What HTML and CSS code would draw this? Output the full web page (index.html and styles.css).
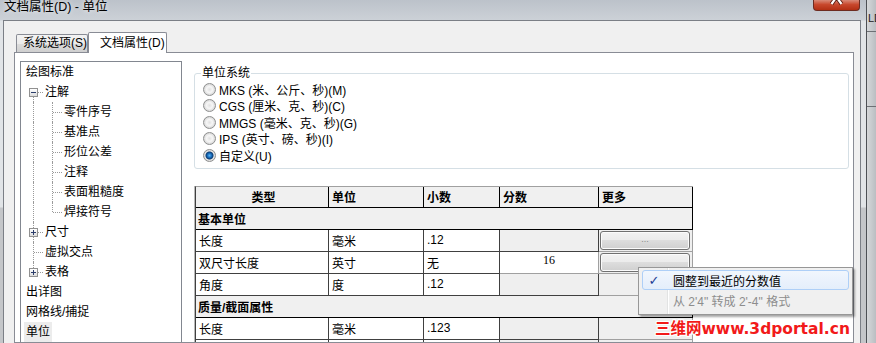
FILE: index.html
```html
<!DOCTYPE html>
<html lang="zh">
  <head>
    <meta charset="UTF-8" />
    <title>文档属性(D) - 单位</title>
    <link rel="stylesheet" href="styles.css">
  </head>
  <body>
    <div class="desk">
      <div class="dialog">
        <div class="titlebar">
          <span class="title">文档属性(D) - 单位</span>
          <span class="close">
            <svg width="47" height="11" viewBox="0 0 47 11">
              <path d="M23.5 -3 L18.5 4 M23.5 -3 L28.5 4" stroke="#5a1c10" stroke-width="4" fill="none" />
              <path d="M23.5 -3 L18.5 4 M23.5 -3 L28.5 4" stroke="#fff" stroke-width="2.2" fill="none" />
            </svg>
          </span>
        </div>
        <div class="client">
          <div class="tabs">
            <div class="tab">系统选项(S)</div>
            <div class="tab active">文档属性(D)</div>
          </div>
          <div class="panel">
            <div class="tree">
              <div class="node"><span class="label">绘图标准</span></div>
              <div class="node"><span class="g first"><i class="box"></i></span><span class="label">注解</span></div>
              <div class="node"><span class="g pipe"></span><span class="g tee"></span><span class="label">零件序号</span></div>
              <div class="node"><span class="g pipe"></span><span class="g tee"></span><span class="label">基准点</span></div>
              <div class="node"><span class="g pipe"></span><span class="g tee"></span><span class="label">形位公差</span></div>
              <div class="node"><span class="g pipe"></span><span class="g tee"></span><span class="label">注释</span></div>
              <div class="node"><span class="g pipe"></span><span class="g tee"></span><span class="label">表面粗糙度</span></div>
              <div class="node"><span class="g pipe"></span><span class="g elbow"></span><span class="label">焊接符号</span></div>
              <div class="node"><span class="g tee"><i class="box plus"></i></span><span class="label">尺寸</span></div>
              <div class="node"><span class="g tee"></span><span class="label">虚拟交点</span></div>
              <div class="node"><span class="g elbow"><i class="box plus"></i></span><span class="label">表格</span></div>
              <div class="node"><span class="label">出详图</span></div>
              <div class="node"><span class="label">网格线/捕捉</span></div>
              <div class="node"><span class="label sel">单位</span></div>
            </div>
            <div class="pane">
              <fieldset class="group">
                <legend>单位系统</legend>
                <label class="radio"><span class="dot"></span>MKS (米、公斤、秒)(M)</label>
                <label class="radio"><span class="dot"></span>CGS (厘米、克、秒)(C)</label>
                <label class="radio"><span class="dot"></span>MMGS (毫米、克、秒)(G)</label>
                <label class="radio"><span class="dot"></span>IPS (英寸、磅、秒)(I)</label>
                <label class="radio checked"><span class="dot"></span>自定义(U)</label>
              </fieldset>
              <table class="units">
                <tr class="head">
                  <th class="c1">类型</th>
                  <th class="c2">单位</th>
                  <th class="c3">小数</th>
                  <th class="c4">分数</th>
                  <th class="c5">更多</th>
                </tr>
                <tr class="section"><td colspan="5">基本单位</td></tr>
                <tr>
                  <td>长度</td><td>毫米</td><td>.12</td><td class="off"></td>
                  <td class="off lite"><span class="more-btn">...</span></td>
                </tr>
                <tr>
                  <td>双尺寸长度</td><td>英寸</td><td>无</td><td class="lite frac">16</td>
                  <td class="off lite"><span class="more-btn"></span></td>
                </tr>
                <tr>
                  <td>角度</td><td>度</td><td>.12</td><td class="off"></td><td class="off lite"></td>
                </tr>
                <tr class="section"><td colspan="5">质量/截面属性</td></tr>
                <tr>
                  <td>长度</td><td>毫米</td><td>.123</td><td class="off"></td><td class="off lite"></td>
                </tr>
                <tr>
                  <td>质量</td><td>千克</td><td>.12</td><td class="off"></td><td class="off lite"></td>
                </tr>
              </table>
            </div>
          </div>
        </div>
      </div>
      <div class="behind"><span>LD</span></div>

      <div class="menu">
        <div class="item hot"><span class="check">✓</span>圆整到最近的分数值</div>
        <div class="item gray"><span class="check"></span>从 2'4" 转成 2'-4" 格式</div>
      </div>
      <div class="mark">三维网www.3dportal.cn</div>
    </div>
  </body>
</html>
```

FILE: styles.css
```css
body {
  margin: 0;
  width: 876px;
  height: 343px;
  overflow: hidden;
  font-family: 'Liberation Sans', 'Noto Sans CJK SC', sans-serif;
  font-size: 12px;
  color: #000;
}
.desk {
  position: relative;
  display: flex;
  height: 343px;
}
.dialog {
  width: 866px;
  flex: none;
  display: flex;
  flex-direction: column;
  background: linear-gradient(#bcc2ca 0, #ccd1d7 20px, #e1e4e7 21px, #e1e4e7 207px, #c4c6c9 208px, #c4c6c9 100%);
}
.titlebar {
  height: 20px;
  display: flex;
  justify-content: space-between;
  align-items: flex-start;
}
.title {
  padding-left: 4px;
  line-height: 15px;
  font-size: 12.5px;
  text-shadow: 0 0 5px rgba(255,255,255,0.9);
}
.close {
  width: 47px;
  height: 11px;
  margin-right: 6px;
  box-sizing: border-box;
  border: 1px solid #6d2b20;
  border-top: 0;
  border-radius: 0 0 4px 4px;
  background: linear-gradient(#d98a78, #c8482d 45%, #b22f13);
  overflow: hidden;
}
.close svg {
  display: block;
  margin-left: -1px;
}
.client {
  flex: 1;
  min-height: 0;
  margin: 0 5px 0 3px;
  border: 1px solid #7b7f86;
  border-bottom: 0;
  background: #f0f0f0;
  padding: 11px 6px 0 10px;
  display: flex;
  flex-direction: column;
}
.tabs {
  display: flex;
  align-items: flex-end;
  height: 21px;
  padding-left: 2px;
  margin-bottom: -1px;
  position: relative;
  z-index: 1;
}
.tab {
  box-sizing: border-box;
  width: 72px;
  height: 18px;
  margin-bottom: 1px;
  padding-left: 6px;
  line-height: 17px;
  white-space: nowrap;
  overflow: hidden;
  border: 1px solid #898c95;
  border-bottom: 0;
  border-radius: 2px 2px 0 0;
  background: linear-gradient(#f3f3f3, #ebebeb 50%, #dddddd 50%, #cfcfcf);
}
.tab.active {
  width: 79px;
  height: 21px;
  margin-bottom: 0;
  padding-left: 11px;
  line-height: 20px;
  background: #fff;
}
.panel {
  flex: 1;
  min-height: 0;
  display: flex;
  border: 1px solid #898c95;
  background: #fff;
  padding-left: 5px;
  overflow: hidden;
}
.tree {
  width: 162px;
  height: 300px;
  flex: none;
  margin-top: 8px;
  box-sizing: border-box;
  border: 1px solid #828790;
  padding-left: 3px;
}
.node {
  display: flex;
  height: 20px;
  line-height: 20px;
}
.label {
  padding: 0 2px;
}
.label.sel {
  background: #ececec;
}
.g {
  position: relative;
  width: 19px;
  flex: none;
}
.g::before {
  content: "";
  position: absolute;
  left: 9px;
  top: 0;
  bottom: 0;
  border-left: 1px dotted #9a9a9a;
}
.g::after {
  content: "";
  position: absolute;
  left: 10px;
  right: 0;
  top: 10px;
  border-top: 1px dotted #9a9a9a;
}
.g.pipe::after {
  display: none;
}
.g.elbow::before {
  bottom: 10px;
}
.g.first::before {
  top: 10px;
}
.box {
  position: absolute;
  left: 5px;
  top: 6px;
  width: 9px;
  height: 9px;
  box-sizing: border-box;
  border: 1px solid #919191;
  background: linear-gradient(#ffffff, #dcdcdc);
  z-index: 1;
}
.box::before {
  content: "";
  position: absolute;
  left: 1px;
  top: 3px;
  width: 5px;
  height: 1px;
  background: #2c3e6b;
}
.box.plus::after {
  content: "";
  position: absolute;
  left: 3px;
  top: 1px;
  width: 1px;
  height: 5px;
  background: #2c3e6b;
}
.pane {
  flex: 1;
  padding: 0 4px 0 12px;
}
.group {
  margin: 12px 0 0 0;
  padding: 0 8px 4px 8px;
  border: 1px solid #d5dfe5;
  border-radius: 3px;
  min-width: 0;
}
.group legend {
  padding: 0 1px;
  margin-left: -2px;
  line-height: 16px;
}
.radio {
  display: flex;
  align-items: center;
  height: 16.5px;
  white-space: nowrap;
}
.dot {
  width: 13px;
  height: 13px;
  margin-right: 3px;
  box-sizing: border-box;
  border-radius: 50%;
  border: 1px solid #8e8f8f;
  background: radial-gradient(circle, #e2e2e2 0, #f6f6f6 3px, #d4d4d4 6px);
}
.radio.checked .dot {
  background: radial-gradient(circle, #5cb6f2 0, #1a6fc0 2px, #0b3d74 3.5px, #e6e6e6 4.5px, #d2d2d2 6px);
}
.units {
  margin: 17px 0 0 1px;
  width: 498px;
  table-layout: fixed;
  border-spacing: 0;
  border-top: 1px solid #a0a0a0;
  border-left: 1px solid #404040;
  box-shadow: -1px 0 0 #b8b8b8;
}
.units th,
.units td {
  box-sizing: border-box;
  height: 22px;
  padding: 0 0 0 3px;
  border-right: 1px solid #404040;
  border-bottom: 1px solid #404040;
  white-space: nowrap;
  overflow: hidden;
}
.units th {
  height: 21px;
  background: #f0f0f0;
  text-align: left;
  font-weight: bold;
  border-right-color: #000;
  border-bottom-color: #000;
}
.units th.c1 {
  width: 133px;
  text-align: center;
}
.units th.c2 { width: 95px; }
.units th.c3 { width: 76px; }
.units th.c4 { width: 99px; }
.units th.c5 { width: 94px; }
.units .section td {
  background: #f0f0f0;
  font-weight: bold;
  padding-left: 2px;
  border-right-color: #000;
  border-bottom-color: #000;
}
.units td.off {
  background: #efefef;
}
.units td.lite {
  border-right-color: #a0a0a0;
  border-bottom-color: #a0a0a0;
}
.units td.frac {
  padding: 0 0 4px;
  text-align: center;
  font-family: 'Liberation Serif', serif;
}
.more-btn {
  display: block;
  width: 90px;
  height: 19px;
  margin: 0 0 0 -2px;
  box-sizing: border-box;
  border: 1px solid #707070;
  border-radius: 3px;
  box-shadow: inset 0 0 0 1px #fbfbfb;
  background: linear-gradient(#f2f2f2, #ebebeb 50%, #dddddd 50%, #cfcfcf);
  color: #8a8a8a;
  font-size: 9px;
  line-height: 15px;
  text-align: center;
}
.behind {
  flex: 1;
  border-left: 1px solid #4d5055;
  background:
    linear-gradient(transparent 31px, #6d7075 31px, #6d7075 32px, transparent 32px, transparent 106px, #6d7075 106px, #6d7075 107px, transparent 107px),
    linear-gradient(to right, #d6d8da, #a8acb1);
  font-size: 11px;
  line-height: 11px;
  color: #222;
  padding: 13px 0 0 1px;
}
.menu {
  position: absolute;
  left: 638px;
  top: 267px;
  width: 215px;
  height: 48px;
  box-sizing: border-box;
  padding: 2px 3px;
  border: 1px solid #979797;
  background: linear-gradient(to right, transparent 28px, #e2e3e3 28px, #e2e3e3 29px, #fff 29px, #fff 30px, transparent 30px), #f0f0f0;
  box-shadow: 2px 2px 2px rgba(0,0,0,0.35);
}
.item {
  display: flex;
  align-items: center;
  height: 21px;
  box-sizing: border-box;
  border: 1px solid transparent;
}
.item.hot {
  height: 20px;
  border-color: #aecff7;
  border-radius: 3px;
  background: linear-gradient(#f1f6fd, #e4eefb);
}
.item.gray {
  color: #8d8d8d;
}
.check {
  width: 22px;
  margin-right: 8px;
  text-align: center;
  color: #1c3f94;
  font-family: 'DejaVu Sans', sans-serif;
  font-size: 13px;
}
.mark {
  position: absolute;
  left: 655px;
  top: 321px;
  font-family: 'DejaVu Sans', 'Noto Sans CJK SC', sans-serif;
  font-weight: bold;
  font-size: 15.5px;
  line-height: 16px;
  color: #f21a1a;
  text-shadow: 1px 0 #fff, -1px 0 #fff, 0 1px #fff, 0 -1px #fff, 1px 1px #fff, -1px -1px #fff, 1px -1px #fff, -1px 1px #fff;
}
```
